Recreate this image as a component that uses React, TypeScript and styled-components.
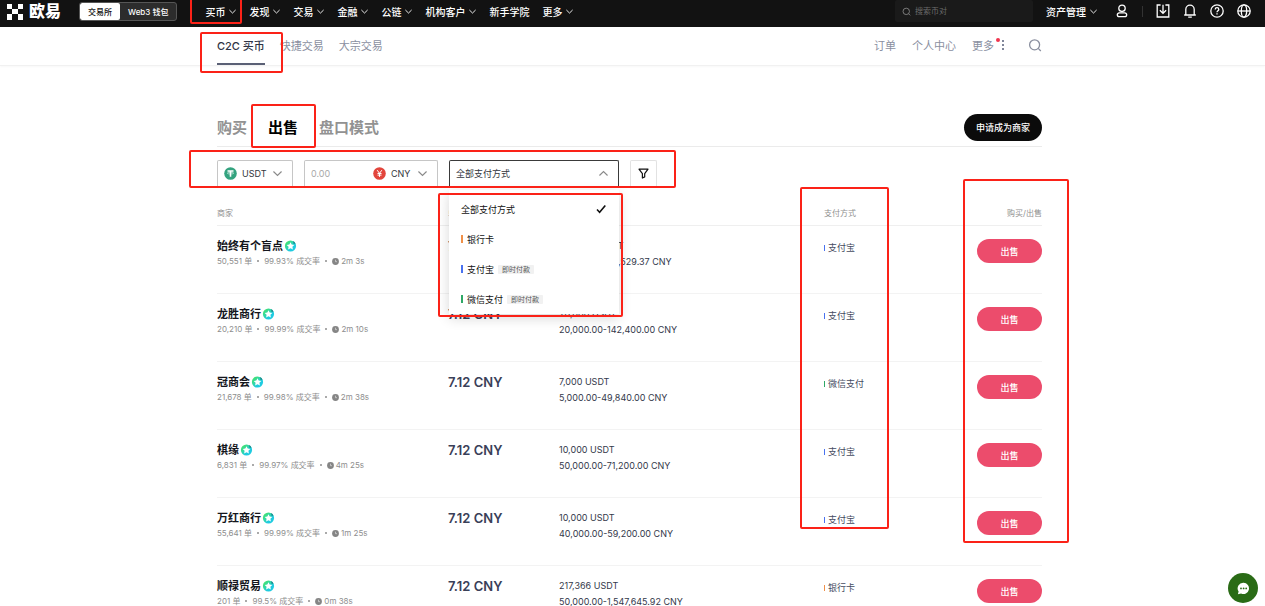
import React, { useState } from "react";
import styled, { createGlobalStyle } from "styled-components";

const FONT = `Inter, "Noto Sans CJK SC", "Liberation Sans", sans-serif`;

const GlobalStyle = createGlobalStyle`
  *, *::before, *::after { box-sizing: border-box; }
  body { margin: 0; background: #fff; color: #2b2f3a; font-family: ${FONT}; }
  button, input, select { font-family: inherit; margin: 0; padding: 0; border: 0; background: none; color: inherit; }
  button { cursor: pointer; }
  a { color: inherit; text-decoration: none; }
  svg { display: block; flex: none; }
`;

const Page = styled.div`
  position: relative;
  height: 100vh;
  overflow: hidden;
`;

const Container = styled.div`
  width: 100%;
  max-width: 825px;
  margin: 0 auto;
`;

/* Red frame that points out a step of the walkthrough. */
const Mark = styled.span<{ $inset: string }>`
  position: absolute;
  inset: ${(p) => p.$inset};
  border: 2px solid #fb2218;
  border-radius: 2px;
  pointer-events: none;
  z-index: 5;
`;

/* ---------- top bar ---------- */

const TopBar = styled.header`
  display: flex;
  align-items: center;
  height: 27px;
  padding: 0 14px 5px 6px;
  background: #121212;
  color: #fff;
`;

const Brand = styled.a`
  display: flex;
  align-items: center;
  gap: 6px;
  font-size: 16px;
  line-height: 20px;
  font-weight: 900;
`;

const Segment = styled.div`
  display: flex;
  height: 19px;
  margin-left: 18px;
  border: 1px solid #565656;
  border-radius: 3px;
  background: #2c2c2c;
  overflow: hidden;
`;

const SegmentButton = styled.button<{ $active?: boolean }>`
  padding: 0 8px;
  font-size: 8px;
  font-weight: 500;
  white-space: nowrap;
  color: ${(p) => (p.$active ? "#111" : "#fff")};
  background: ${(p) => (p.$active ? "#fff" : "transparent")};
  border-radius: 2px;
`;

const Nav = styled.nav`
  display: flex;
  gap: 13px;
  margin-left: 28px;
`;

const NavItem = styled.button`
  position: relative;
  display: flex;
  align-items: center;
  gap: 4px;
  height: 22px;
  font-size: 10px;
  font-weight: 500;
  white-space: nowrap;
  color: #fff;
`;

const AssetsItem = styled(NavItem)`
  padding-right: 5px;
`;

const TopTools = styled.div`
  display: flex;
  align-items: center;
  gap: 13px;
  margin-left: auto;
`;

const TopSearch = styled.label`
  display: flex;
  align-items: center;
  gap: 4px;
  width: 138px;
  height: 22px;
  padding: 0 7px;
  border-radius: 2px;
  background: #1a1a1a;
  color: #8c8c8c;
`;

const TopSearchInput = styled.input`
  width: 100%;
  min-width: 0;
  font-size: 8px;
  outline: none;
  &::placeholder { color: #6a6a6a; opacity: 1; }
`;

const IconButton = styled.button`
  display: flex;
`;

const Divider = styled.span`
  width: 1px;
  height: 11px;
  background: #333;
`;

/* ---------- sub navigation ---------- */

const SubBar = styled.div`
  height: 39px;
  padding-right: 6px;
  border-bottom: 1px solid #f1f1f1;
  box-shadow: 0 1px 2px rgba(0, 0, 0, 0.03);
`;

const SubRow = styled(Container)`
  display: flex;
  justify-content: space-between;
`;

const SubGroup = styled.div<{ $gap: number }>`
  display: flex;
  align-items: center;
  gap: ${(p) => p.$gap}px;
`;

const SubLink = styled.a<{ $active?: boolean }>`
  position: relative;
  display: flex;
  align-items: center;
  height: 38px;
  padding-bottom: 2px;
  font-size: 11px;
  font-weight: ${(p) => (p.$active ? 500 : 400)};
  white-space: nowrap;
  color: ${(p) => (p.$active ? "#2f3445" : "#8a8f9f")};
  box-shadow: ${(p) => (p.$active ? "inset 0 -2px #5a6075" : "none")};
`;

const SearchLink = styled(SubLink)`
  padding-left: 8px;
`;

const MoreDots = styled.span`
  position: relative;
  display: flex;
  margin-left: 8px;
`;

const RedDot = styled.span`
  position: absolute;
  top: -2px;
  left: -6px;
  width: 4px;
  height: 4px;
  border-radius: 50%;
  background: #f0354f;
`;

/* ---------- trade area ---------- */

const Main = styled.main`
  padding: 43px 6px 0 0;
`;

const TabRow = styled.div`
  display: flex;
  align-items: center;
  gap: 21px;
  height: 38px;
  border-bottom: 1px solid #ebebeb;
`;

const Tab = styled.button<{ $active?: boolean }>`
  position: relative;
  font-size: 15px;
  line-height: 20px;
  font-weight: 700;
  white-space: nowrap;
  color: ${(p) => (p.$active ? "#000" : "#929292")};
`;

const ApplyButton = styled.button`
  width: 78px;
  height: 27px;
  margin-left: auto;
  border-radius: 14px;
  background: #0b0b0b;
  color: #fff;
  font-size: 9px;
  font-weight: 500;
`;

const Filters = styled.div`
  position: relative;
  display: flex;
  gap: 11px;
  margin-top: 13px;
`;

const Field = styled.div<{ $width: number; $border: string }>`
  position: relative;
  display: flex;
  align-items: center;
  gap: 5px;
  width: ${(p) => p.$width}px;
  height: 26px;
  padding: 0 10px 0 6px;
  border: 1px solid ${(p) => p.$border};
  border-bottom: 0;
  border-radius: 2px 2px 0 0;
`;

const FieldSelect = styled.select`
  flex: 1;
  min-width: 0;
  appearance: none;
  outline: none;
  font-size: 9px;
  line-height: 16px;
  color: #33363d;
`;

const CurrencySelect = styled(FieldSelect)`
  flex: 0 0 22px;
`;

const AmountInput = styled.input`
  flex: 1;
  min-width: 0;
  outline: none;
  font-size: 9px;
  &::placeholder { color: #a9a9a9; opacity: 1; }
`;

const FilterButton = styled.button`
  display: flex;
  align-items: center;
  justify-content: center;
  width: 27px;
  height: 26px;
  border: 1px solid #e2e2e2;
  border-bottom: 0;
  border-radius: 2px 2px 0 0;
  color: #111;
`;

const Menu = styled.div`
  position: absolute;
  top: 29px;
  left: -1px;
  right: -1px;
  z-index: 3;
  padding-top: 4px;
  background: #fff;
  box-shadow: 0 4px 12px rgba(0, 0, 0, 0.16);
`;

const MenuItem = styled.button`
  display: flex;
  align-items: center;
  gap: 4px;
  width: 100%;
  height: 30px;
  padding: 0 13px 0 12px;
  font-size: 9px;
  color: #111;
`;

const Bar = styled.span<{ $color: string; $small?: boolean }>`
  width: ${(p) => (p.$small ? 1 : 2)}px;
  height: ${(p) => (p.$small ? 6 : 8)}px;
  background: ${(p) => p.$color};
`;

const InstantTag = styled.span`
  padding: 0 4px;
  border-radius: 1px;
  background: #f1f1f1;
  color: #555;
  font-size: 7px;
  line-height: 9px;
`;

const CheckSlot = styled.span`
  margin-left: auto;
`;

/* ---------- order table ---------- */

const TableWrap = styled.div`
  position: relative;
`;

const Table = styled.table`
  width: 100%;
  table-layout: fixed;
  border-collapse: separate;
  border-spacing: 0;
`;

const Th = styled.th<{ $width?: number }>`
  width: ${(p) => (p.$width ? `${p.$width}px` : "auto")};
  height: 40px;
  padding: 21px 0 6px;
  border-bottom: 1px solid #efefef;
  font-size: 8px;
  line-height: 12px;
  font-weight: 400;
  text-align: left;
  color: #8f8f8f;
  &:last-child { text-align: right; }
`;

const Td = styled.td<{ $top: number }>`
  height: 68px;
  padding: ${(p) => p.$top}px 0 0;
  border-bottom: 1px solid #f3f3f3;
  vertical-align: top;
  font-size: 9px;
  line-height: 16px;
  color: #33384a;
  &:last-child { text-align: right; }
`;

const Merchant = styled.a`
  display: flex;
  align-items: center;
  gap: 1px;
  font-size: 11px;
  line-height: 16px;
  font-weight: 600;
  color: #14161c;
`;

const Stats = styled.div`
  display: flex;
  align-items: center;
  gap: 5px;
  font-size: 8px;
  line-height: 14px;
  color: #8e8e8e;
`;

const Dot = styled.span`
  width: 2px;
  height: 2px;
  border-radius: 50%;
  background: #8e8e8e;
`;

const Time = styled.span`
  display: flex;
  align-items: center;
  gap: 2px;
`;

const Price = styled.strong`
  display: block;
  font-size: 13px;
  font-weight: 600;
  color: #3a4058;
`;

const Pay = styled.div`
  display: flex;
  align-items: center;
  gap: 3px;
  color: #454b60;
`;

const SellButton = styled.button`
  display: block;
  width: 65px;
  height: 24px;
  margin-left: auto;
  border-radius: 12px;
  background: #ec4c6c;
  color: #fff;
  font-size: 9px;
  font-weight: 500;
`;

const ChatButton = styled.button`
  position: fixed;
  right: 7px;
  bottom: 3px;
  z-index: 6;
  display: flex;
  align-items: center;
  justify-content: center;
  width: 30px;
  height: 30px;
  border-radius: 50%;
  background: #2a6b16;
`;

/* ---------- drawings ---------- */

const Chevron = ({ size = 7, up = false, color = "currentColor" }: { size?: number; up?: boolean; color?: string }) => (
  <svg width={size} height={size} viewBox="0 0 10 10" fill="none" stroke={color} strokeWidth="1.3" aria-hidden="true">
    <path d={up ? "M0.5 7.2 5 2.8l4.5 4.4" : "M0.5 2.8 5 7.2l4.5-4.4"} />
  </svg>
);

const LogoMark = () => (
  <svg width="17" height="17" viewBox="0 0 17 17" fill="#fff" aria-hidden="true">
    <path d="M1 1h5v5H1zM12 1h5v5h-5zM6 6h6v5H6zM1 11h5v6H1zM12 11h5v6h-5z" />
  </svg>
);

const SearchIcon = ({ size }: { size: number }) => (
  <svg width={size} height={size} viewBox="0 0 14 14" fill="none" stroke="currentColor" strokeWidth="1.3" aria-hidden="true">
    <circle cx="6.6" cy="6.8" r="5" />
    <path d="m10.2 10.4 2.6 2.6" />
  </svg>
);

const icon14 = {
  width: 14,
  height: 14,
  viewBox: "0 0 14 14",
  fill: "none",
  stroke: "#fff",
  strokeWidth: 1.3,
  "aria-hidden": true,
} as const;

const UserIcon = () => (
  <svg {...icon14}>
    <circle cx="7" cy="4.3" r="3.2" />
    <path d="M4.200 8.900h5.600a1.900 1.900 0 0 1 0 3.800H4.200a1.900 1.900 0 0 1 0-3.800z" />
  </svg>
);

const DownloadIcon = () => (
  <svg {...icon14}>
    <path d="M4.600 1H1.200v12h11.600V1H9.400M7 .8v8.400M3.900 6.300 7 9.400l3.100-3.100" />
  </svg>
);

const BellIcon = () => (
  <svg {...icon14}>
    <path d="M1.200 11h11.600M2.800 11V5.400C2.800 3 4.600 1.200 7 1.200S11.200 3 11.200 5.400V11M5.200 13.200h3.600" />
  </svg>
);

const HelpIcon = () => (
  <svg {...icon14}>
    <circle cx="7" cy="7" r="6.200" />
    <path d="M5.200 5.500C5.200 4.300 6 3.700 7 3.700s1.800.7 1.800 1.700c0 1.300-1.800 1.400-1.800 2.900M7 9.300v1.300" />
  </svg>
);

const GlobeIcon = () => (
  <svg {...icon14}>
    <circle cx="7" cy="7" r="6.200" />
    <ellipse cx="7" cy="7" rx="2.700" ry="6.200" />
    <path d="M.8 7h12.400" />
  </svg>
);

const TetherIcon = () => (
  <svg width="13" height="13" viewBox="0 0 13 13" aria-hidden="true">
    <circle cx="6.500" cy="6.500" r="6.300" fill="#34a37f" />
    <path d="M3.500 3.300h6v1.500H7.300v5H5.700v-5H3.500z" fill="#fff" />
    <ellipse cx="6.500" cy="6.200" rx="3.300" ry=".8" fill="none" stroke="#fff" strokeWidth=".5" />
  </svg>
);

const YuanIcon = () => (
  <svg width="13" height="13" viewBox="0 0 13 13" aria-hidden="true">
    <circle cx="6.500" cy="6.500" r="6.300" fill="#e2453c" />
    <path d="M4.200 3.200 6.500 6.300l2.300-3.100M6.500 6.300v3.600M4.500 6.500h4M4.500 8.100h4" fill="none" stroke="#fff" strokeWidth="1" />
  </svg>
);

const FunnelIcon = () => (
  <svg width="11" height="11" viewBox="0 0 11 11" fill="none" stroke="currentColor" strokeWidth="1.200" strokeLinejoin="round" aria-hidden="true">
    <path d="M1 1.200h9L6.700 5.700v3.200L4.400 10V5.700z" />
  </svg>
);

const CheckIcon = () => (
  <svg width="10" height="10" viewBox="0 0 10 10" fill="none" stroke="#111" strokeWidth="1.600" aria-hidden="true">
    <path d="m1 5.500 2.600 2.700L9.300 1.500" />
  </svg>
);

const BadgeIcon = () => (
  <svg width="13" height="12" viewBox="0 0 13 12" aria-hidden="true">
    <defs>
      <linearGradient id="badge" x1="0" y1="0" x2="1" y2="1">
        <stop offset="0.2" stopColor="#3fe07a" />
        <stop offset="0.65" stopColor="#1fcbe0" />
      </linearGradient>
    </defs>
    <circle cx="6.500" cy="6" r="5.600" fill="url(#badge)" />
    <path d="M9 .9a5.600 5.600 0 0 1 2.500 2.600L9.600 4z" fill="#1a8a8c" />
    <path d="m6.500 2.200 1.200 2.400 2.600.4-1.900 1.800.5 2.600-2.400-1.200-2.400 1.200.5-2.600L2.700 5l2.600-.4z" fill="#fff" />
  </svg>
);

const ClockIcon = () => (
  <svg width="7" height="7" viewBox="0 0 7 7" aria-hidden="true">
    <circle cx="3.500" cy="3.500" r="3.400" fill="#858585" />
    <path d="M3.500 1.700v2h1.500" fill="none" stroke="#ddd" strokeWidth=".7" />
  </svg>
);

const DotsIcon = () => (
  <svg width="2" height="10" viewBox="0 0 2 10" fill="#80869a" aria-hidden="true">
    <path d="M0 0h2v2H0zM0 4h2v2H0zM0 8h2v2H0z" />
  </svg>
);

const ChatIcon = () => (
  <svg width="13" height="13" viewBox="0 0 13 13" aria-hidden="true">
    <path d="M6.600.8a5.600 5.600 0 1 1-2.500 10.700L.9 12.200l.7-2.700A5.600 5.600 0 0 1 6.600.8z" fill="#fff" />
    <g fill="#2a6b16">
      <circle cx="4" cy="6.400" r=".9" />
      <circle cx="6.600" cy="6.400" r=".9" />
      <circle cx="9.200" cy="6.400" r=".9" />
    </g>
  </svg>
);

/* ---------- data ---------- */

const ORANGE = "#f09048";
const BLUE = "#4a72f0";
const GREEN = "#2fa866";

const NAV = [
  { label: "买币", menu: true, marked: true },
  { label: "发现", menu: true },
  { label: "交易", menu: true },
  { label: "金融", menu: true },
  { label: "公链", menu: true },
  { label: "机构客户", menu: true },
  { label: "新手学院", menu: false },
  { label: "更多", menu: true },
];

const ALL = "全部支付方式";
const METHODS = [
  { label: "银行卡", color: ORANGE, instant: false },
  { label: "支付宝", color: BLUE, instant: true },
  { label: "微信支付", color: GREEN, instant: true },
];

const colorOf = (pay: string) => METHODS.find((m) => m.label === pay)?.color ?? BLUE;

const ORDERS = [
  { name: "始终有个盲点", count: "50,551", rate: "99.93%", time: "2m 3s", amount: "9,625.02", limit: "50,000.00-68,529.37", pay: "支付宝" },
  { name: "龙胜商行", count: "20,210", rate: "99.99%", time: "2m 10s", amount: "20,000", limit: "20,000.00-142,400.00", pay: "支付宝" },
  { name: "冠商会", count: "21,678", rate: "99.98%", time: "2m 38s", amount: "7,000", limit: "5,000.00-49,840.00", pay: "微信支付" },
  { name: "棋缘", count: "6,831", rate: "99.97%", time: "4m 25s", amount: "10,000", limit: "50,000.00-71,200.00", pay: "支付宝" },
  { name: "万红商行", count: "55,641", rate: "99.99%", time: "1m 25s", amount: "10,000", limit: "40,000.00-59,200.00", pay: "支付宝" },
  { name: "顺禄贸易", count: "201", rate: "99.5%", time: "0m 38s", amount: "217,366", limit: "50,000.00-1,547,645.92", pay: "银行卡" },
];

export default function App() {
  const [method, setMethod] = useState(ALL);

  return (
    <Page>
      <GlobalStyle />
      <TopBar>
        <Brand href="#">
          <LogoMark />
          欧易
        </Brand>
        <Segment>
          <SegmentButton $active>交易所</SegmentButton>
          <SegmentButton>Web3 钱包</SegmentButton>
        </Segment>
        <Nav>
          {NAV.map((n) => (
            <NavItem key={n.label}>
              {n.label}
              {n.menu && <Chevron />}
              {n.marked && <Mark $inset="-2px -6px -2px -15px" />}
            </NavItem>
          ))}
        </Nav>
        <TopTools>
          <TopSearch>
            <SearchIcon size={9} />
            <TopSearchInput placeholder="搜索币对" aria-label="搜索币对" />
          </TopSearch>
          <AssetsItem>
            资产管理
            <Chevron />
          </AssetsItem>
          <IconButton aria-label="账户"><UserIcon /></IconButton>
          <Divider />
          <IconButton aria-label="下载"><DownloadIcon /></IconButton>
          <IconButton aria-label="通知"><BellIcon /></IconButton>
          <IconButton aria-label="帮助"><HelpIcon /></IconButton>
          <IconButton aria-label="语言"><GlobeIcon /></IconButton>
        </TopTools>
      </TopBar>

      <SubBar>
        <SubRow>
          <SubGroup $gap={15}>
            <SubLink href="#" $active>
              C2C 买币
              <Mark $inset="5px -18px -8px -17px" />
            </SubLink>
            <SubLink href="#">快捷交易</SubLink>
            <SubLink href="#">大宗交易</SubLink>
          </SubGroup>
          <SubGroup $gap={16}>
            <SubLink href="#">订单</SubLink>
            <SubLink href="#">个人中心</SubLink>
            <SubLink href="#">
              更多
              <MoreDots>
                <DotsIcon />
                <RedDot />
              </MoreDots>
            </SubLink>
            <SearchLink href="#" aria-label="搜索">
              <SearchIcon size={14} />
            </SearchLink>
          </SubGroup>
        </SubRow>
      </SubBar>

      <Main>
        <Container>
          <TabRow>
            <Tab>购买</Tab>
            <Tab $active>
              出售
              <Mark $inset="-14px -18px -10px -17px" />
            </Tab>
            <Tab>盘口模式</Tab>
            <ApplyButton>申请成为商家</ApplyButton>
          </TabRow>

          <Filters>
            <Field $width={76} $border="#c6c6c6">
              <TetherIcon />
              <FieldSelect aria-label="币种">
                <option>USDT</option>
              </FieldSelect>
              <Chevron size={9} color="#8a8a8a" />
            </Field>
            <Field $width={134} $border="#c6c6c6">
              <AmountInput placeholder="0.00" aria-label="金额" />
              <YuanIcon />
              <CurrencySelect aria-label="法币">
                <option>CNY</option>
              </CurrencySelect>
              <Chevron size={9} color="#8a8a8a" />
            </Field>
            <Field $width={170} $border="#3a3a3a">
              <FieldSelect aria-label="支付方式" value={method} onChange={(e) => setMethod(e.target.value)}>
                <option>{ALL}</option>
                {METHODS.map((m) => (
                  <option key={m.label}>{m.label}</option>
                ))}
              </FieldSelect>
              <Chevron size={9} up color="#8a8a8a" />
              <Menu>
                <MenuItem onClick={() => setMethod(ALL)}>
                  {ALL}
                  {method === ALL && <CheckSlot><CheckIcon /></CheckSlot>}
                </MenuItem>
                {METHODS.map((m) => (
                  <MenuItem key={m.label} onClick={() => setMethod(m.label)}>
                    <Bar $color={m.color} />
                    {m.label}
                    {m.instant && <InstantTag>即时付款</InstantTag>}
                    {method === m.label && <CheckSlot><CheckIcon /></CheckSlot>}
                  </MenuItem>
                ))}
                <Mark $inset="3px -4px -3px -11px" />
              </Menu>
            </Field>
            <FilterButton aria-label="筛选"><FunnelIcon /></FilterButton>
            <Mark $inset="-10px 366px -2px -28px" />
          </Filters>

          <TableWrap>
            <Table>
              <thead>
                <tr>
                  <Th $width={231}>商家</Th>
                  <Th $width={111}>单价</Th>
                  <Th $width={265}>数量/限额</Th>
                  <Th>支付方式</Th>
                  <Th>购买/出售</Th>
                </tr>
              </thead>
              <tbody>
                {ORDERS.map((o) => (
                  <tr key={o.name}>
                    <Td $top={12}>
                      <Merchant href="#">
                        {o.name}
                        <BadgeIcon />
                      </Merchant>
                      <Stats>
                        <span>{o.count} 单</span>
                        <Dot />
                        <span>{o.rate} 成交率</span>
                        <Dot />
                        <Time>
                          <ClockIcon />
                          {o.time}
                        </Time>
                      </Stats>
                    </Td>
                    <Td $top={12}>
                      <Price>7.12 CNY</Price>
                    </Td>
                    <Td $top={12}>
                      <div>{o.amount} USDT</div>
                      <div>{o.limit} CNY</div>
                    </Td>
                    <Td $top={14}>
                      <Pay>
                        <Bar $color={colorOf(o.pay)} $small />
                        {o.pay}
                      </Pay>
                    </Td>
                    <Td $top={13}>
                      <SellButton>出售</SellButton>
                    </Td>
                  </tr>
                ))}
              </tbody>
            </Table>
            <Mark $inset="1px 153px 105px 583px" />
            <Mark $inset="-7px -27px 91px 746px" />
          </TableWrap>
        </Container>
      </Main>

      <ChatButton aria-label="在线客服">
        <ChatIcon />
      </ChatButton>
    </Page>
  );
}
